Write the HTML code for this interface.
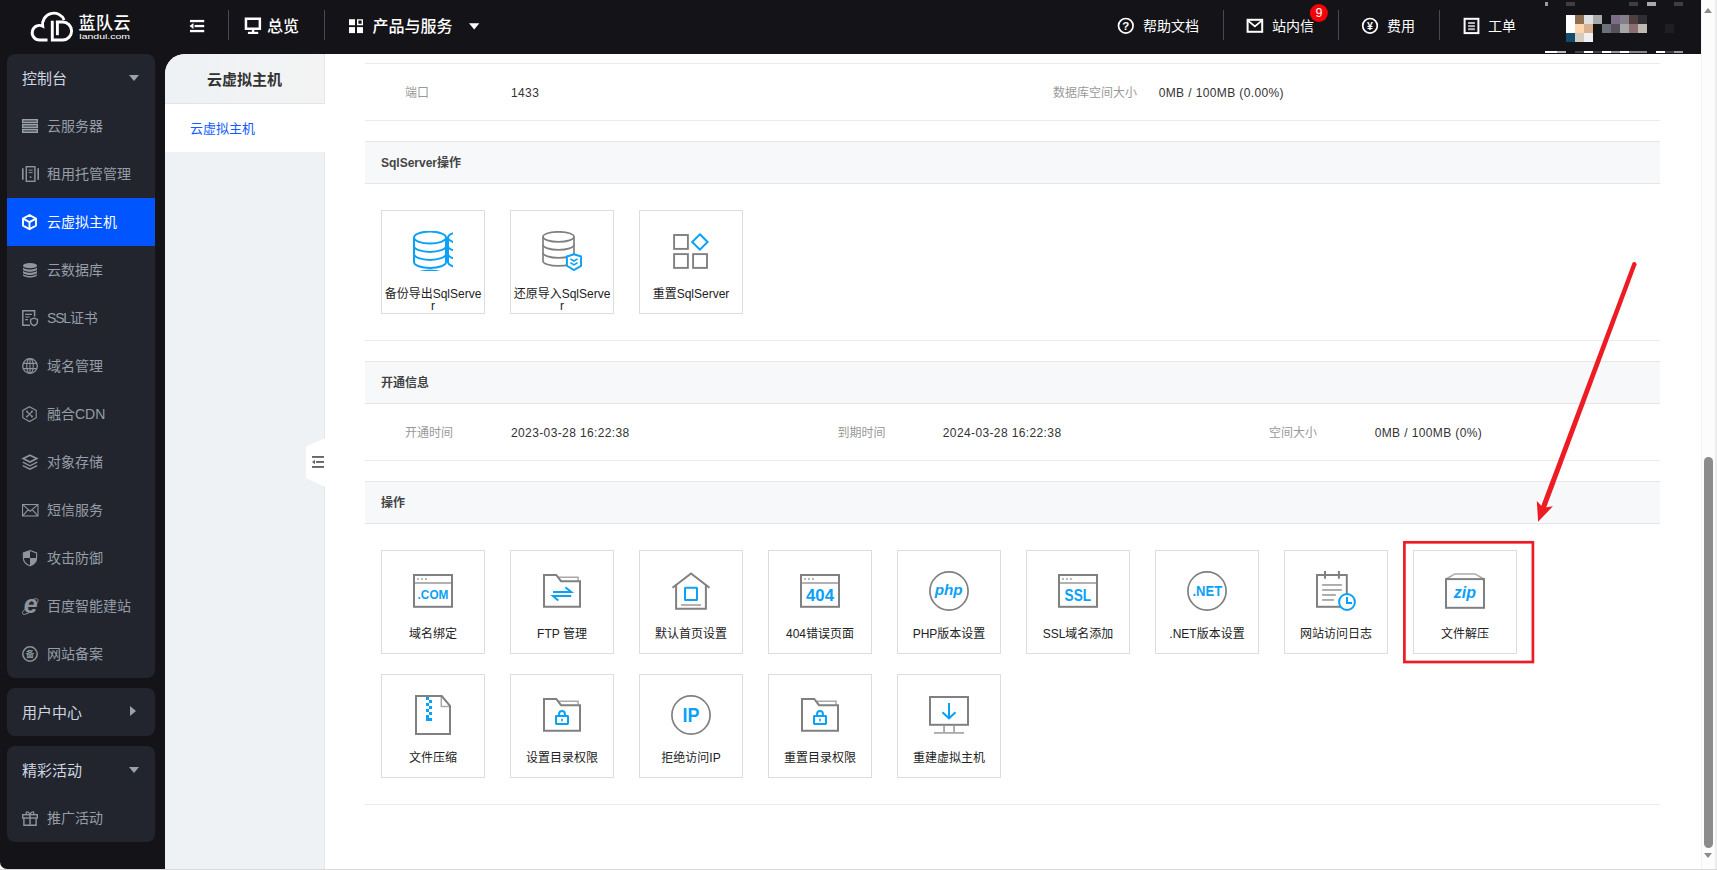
<!DOCTYPE html>
<html lang="zh-CN">
<head>
<meta charset="utf-8">
<title>蓝队云 控制台 - 云虚拟主机</title>
<style>
*{box-sizing:border-box;margin:0;padding:0}
html,body{width:1717px;height:870px;overflow:hidden;background:#fff}
body{position:relative;font-family:"Liberation Sans","Noto Sans CJK SC",sans-serif;font-size:12px;color:#333;-webkit-font-smoothing:antialiased}
.abs{position:absolute}
/* header */
#hdr{position:absolute;left:0;top:0;width:1701px;height:54px;background:#131318;color:#fff}
#hdr .t{position:absolute;top:0;height:54px;line-height:52px;white-space:nowrap;color:#fff}
#hdr .t16{font-size:16px;line-height:54px;font-weight:500}
#hdr .t14{font-size:14px}
#hdr .dv{position:absolute;top:10px;width:1.4px;height:30px;background:#474a55}
#hdr svg{position:absolute;overflow:visible}
#ava i{position:absolute;display:block}
/* sidebar */
#side{position:absolute;left:0;top:54px;width:200px;height:815px;background:#131318;border-bottom-left-radius:7px}
.pnl{position:absolute;left:7px;width:148px;background:#22252e;border-radius:8px;overflow:hidden}
.pnl .h{position:relative;height:48px;line-height:49px;padding-left:15px;font-size:15px;color:#cfd6e0}
.pnl .h i{position:absolute;right:16px;top:21px;width:0;height:0;border-left:5.5px solid transparent;border-right:5.5px solid transparent;border-top:6px solid #9aa3ad}
.pnl .h i.r{top:18px;right:19px;border-top:5.5px solid transparent;border-bottom:5.5px solid transparent;border-left:6px solid #9aa3ad;border-right:0}
.pnl .it{position:relative;height:48px;line-height:49px;padding-left:40px;font-size:14px;color:#969da7;white-space:nowrap}
.pnl .it.on{background:#0055ff;color:#fff}
.pnl .it svg{position:absolute;left:15px;top:16px;width:16px;height:16px;overflow:visible}
/* submenu */
#sub{position:absolute;left:165px;top:54px;width:160px;height:816px;background:#eff2f5;border-top-left-radius:20px;overflow:hidden}
#sub .tt{height:50px;line-height:52px;text-align:center;font-size:15px;font-weight:bold;color:#333;background:linear-gradient(90deg,#eef2f5,#f3f3f3);border-bottom:1px solid #e2e4e6;border-right:1px solid #e4e7ea}
#sub .si{height:48px;line-height:49px;padding-left:25px;font-size:13px;color:#0f5bff;background:#fff}
/* main */
#main{position:absolute;left:325px;top:54px;width:1376px;height:816px;background:#fff;overflow:hidden}
.ln{position:absolute;left:40px;width:1295px;height:1px;background:#ebebeb}
.sh{position:absolute;left:40px;width:1295px;height:43px;background:#f7f8fa;border-top:1px solid #e6e6e6;border-bottom:1px solid #e6e6e6;line-height:43px;padding-left:16px;font-weight:bold;font-size:12px;color:#444}
.lb{position:absolute;color:#999;font-size:12px;white-space:nowrap;line-height:16px}
.vl{position:absolute;color:#333;font-size:12px;white-space:nowrap;line-height:16px;letter-spacing:.38px}
.tile{position:absolute;width:104px;height:104px;border:1px solid #ddd;background:#fff}
.tile svg{position:absolute;left:31px;top:20px;width:40px;height:40px;overflow:hidden}
.tile span{position:absolute;left:0;top:77px;width:102px;padding:0 2px;text-align:center;font-size:12px;line-height:12px;color:#222;word-break:break-all}
/* scrollbar */
#sb{position:absolute;left:1701px;top:0;width:16px;height:870px;background:#fcfcfc;border-left:1px solid #f3f3f3}
</style>
</head>
<body>
<div id="hdr">
<svg width="1701" height="54" viewBox="0 0 1701 54" style="left:0;top:0">
 <g fill="none" stroke="#fff" stroke-width="2.9">
  <path d="M47.500 40H39.500A7.300 7.300 0 1 1 42.700 26.140A11.240 11.240 0 0 1 64.150 20"/>
  <path d="M55.9 22H62.6A9 9 0 0 1 62.6 40H52.3V20.7"/>
  <path d="M57.4 21V35.2"/>
 </g>
 <text x="78.6" y="29" font-family="'Liberation Sans','Noto Sans CJK SC',sans-serif" font-size="17" font-weight="500" fill="#fff" textLength="52" lengthAdjust="spacing">蓝队云</text>
 <text x="79.3" y="39.2" font-family="'Liberation Sans',sans-serif" font-size="7.5" fill="#fff" textLength="50.8" lengthAdjust="spacingAndGlyphs">landui.com</text>
 <!-- fold icon -->
 <g fill="#fff">
  <rect x="190" y="19.900" width="14.200" height="2.300"/><rect x="194.600" y="24.900" width="9.600" height="2.300"/><rect x="190" y="29.900" width="14.200" height="2.300"/>
  <path d="M189.500 26.050L193.500 23.100V29Z"/>
 </g>
 <!-- monitor -->
 <g fill="#fff"><path d="M244.700 17.500h16.400v12.600H244.700zM247.200 20v7.500h11.400V20z" fill-rule="evenodd"/><rect x="251.900" y="30" width="2.400" height="2"/><rect x="247.900" y="31.800" width="10.300" height="2.200"/></g>
 <!-- grid -->
 <g fill="#fff"><rect x="349" y="19.2" width="6" height="6"/><rect x="349" y="27.1" width="6" height="6"/><rect x="357" y="27.1" width="6" height="6"/><path d="M357 19.2h6v6h-6zM358.4 20.6v3.2h3.2v-3.2z" fill-rule="evenodd"/><path d="M469 23.2h10.4l-5.2 6.2z"/></g>
 <!-- help -->
 <circle cx="1125.8" cy="25.8" r="7.3" fill="none" stroke="#fff" stroke-width="1.7"/>
 <text x="1125.8" y="30" text-anchor="middle" font-family="'Liberation Sans',sans-serif" font-size="11.5" font-weight="bold" fill="#fff">?</text>
 <!-- mail -->
 <g fill="none" stroke="#fff" stroke-width="2"><rect x="1247.6" y="19.8" width="14.6" height="12"/><path d="M1248 20.6L1254.9 26.4L1261.8 20.6" stroke-width="1.8"/></g>
 <!-- badge -->
 <circle cx="1318.9" cy="13" r="9" fill="#f60309"/>
 <text x="1318.9" y="17.400" text-anchor="middle" font-family="'Liberation Sans',sans-serif" font-size="12.500" fill="#fff">9</text>
 <!-- yen -->
 <circle cx="1370" cy="25.8" r="7.3" fill="none" stroke="#fff" stroke-width="1.7"/>
 <text x="1370" y="29.6" text-anchor="middle" font-family="'Liberation Sans',sans-serif" font-size="10.5" font-weight="bold" fill="#fff">¥</text>
 <!-- order -->
 <rect x="1464.6" y="18.8" width="13.8" height="14.3" fill="none" stroke="#fff" stroke-width="2"/>
 <g fill="#b9b9b9"><rect x="1468.1" y="22" width="6.8" height="2"/><rect x="1468.1" y="25.1" width="6.8" height="2"/><rect x="1468.1" y="28.2" width="6.8" height="2"/></g>
</svg>
<i class="dv" style="left:228px"></i><i class="dv" style="left:324px"></i>
<i class="dv" style="left:1223px"></i><i class="dv" style="left:1338px"></i><i class="dv" style="left:1439px"></i>
<span class="t t16" style="left:267px">总览</span>
<span class="t t16" style="left:372.5px">产品与服务</span>
<span class="t t14" style="left:1143px">帮助文档</span>
<span class="t t14" style="left:1272px">站内信</span>
<span class="t t14" style="left:1387px">费用</span>
<span class="t t14" style="left:1488px">工单</span>
<div id="ava"><i style="left:1566px;top:15px;width:9px;height:9px;background:#fff"></i><i style="left:1575px;top:15px;width:9px;height:9px;background:#8d7054"></i><i style="left:1584px;top:15px;width:9px;height:9px;background:#e0e0e0"></i><i style="left:1593px;top:15px;width:9px;height:9px;background:#a8a8a8"></i><i style="left:1611px;top:15px;width:9px;height:9px;background:#7c6c8a"></i><i style="left:1620px;top:15px;width:9px;height:9px;background:#867e86"></i><i style="left:1629px;top:15px;width:9px;height:9px;background:#4f3f3f"></i><i style="left:1638px;top:15px;width:9px;height:9px;background:#2f2f33"></i><i style="left:1566px;top:24px;width:9px;height:9px;background:#fff"></i><i style="left:1575px;top:24px;width:9px;height:9px;background:#fdd5ae"></i><i style="left:1584px;top:24px;width:9px;height:9px;background:#d9b190"></i><i style="left:1602px;top:24px;width:9px;height:9px;background:#6c7079"></i><i style="left:1611px;top:24px;width:9px;height:9px;background:#56535f"></i><i style="left:1620px;top:24px;width:9px;height:9px;background:#a6a6a6"></i><i style="left:1629px;top:24px;width:9px;height:9px;background:#8b6e71"></i><i style="left:1638px;top:24px;width:9px;height:9px;background:#bfb9b1"></i><i style="left:1665px;top:24px;width:9px;height:9px;background:#1f1f21"></i><i style="left:1566px;top:33px;width:9px;height:9px;background:#144c6c"></i><i style="left:1575px;top:33px;width:9px;height:9px;background:#d6cbc0"></i><i style="left:1584px;top:33px;width:9px;height:9px;background:#f0f0f0"></i><i style="left:1545px;top:2px;width:3px;height:4px;background:#9a9a9a"></i><i style="left:1566px;top:2px;width:9px;height:4px;background:#3f3f43"></i><i style="left:1629px;top:2px;width:9px;height:4px;background:#3f3f43"></i><i style="left:1647px;top:2px;width:9px;height:4px;background:#a9a9a9"></i><i style="left:1674px;top:2px;width:9px;height:4px;background:#3f3f43"></i><i style="left:1545px;top:51px;width:12px;height:1.5px;background:#fff"></i><i style="left:1557px;top:51px;width:9px;height:1.5px;background:#bbb"></i><i style="left:1575px;top:51px;width:9px;height:1.5px;background:#444"></i><i style="left:1584px;top:51px;width:9px;height:1.5px;background:#fff"></i><i style="left:1593px;top:51px;width:9px;height:1.5px;background:#444"></i><i style="left:1602px;top:51px;width:9px;height:1.5px;background:#fff"></i><i style="left:1611px;top:51px;width:9px;height:1.5px;background:#999"></i><i style="left:1620px;top:51px;width:9px;height:1.5px;background:#fff"></i><i style="left:1629px;top:51px;width:18px;height:1.5px;background:#888"></i><i style="left:1656px;top:51px;width:9px;height:1.5px;background:#fff"></i><i style="left:1665px;top:51px;width:9px;height:1.5px;background:#444"></i><i style="left:1674px;top:51px;width:9px;height:1.5px;background:#999"></i></div>
</div>
<div id="side">
<div class="pnl" style="top:0;height:624px"><div class="h">控制台<i></i></div>
<div class="it"><svg viewBox="0 0 16 16"><g fill="#555c63" stroke="#9aa2a8" stroke-width="1.3"><rect x=".65" y="1.65" width="14.7" height="2.9"/><rect x=".65" y="6.55" width="14.7" height="2.9"/><rect x=".65" y="11.45" width="14.7" height="2.9"/></g></svg>云服务器</div>
<div class="it"><svg viewBox="0 0 16 16"><g fill="none" stroke="#8e959d" stroke-width="1.4"><rect x="4.3" y=".7" width="8.6" height="14.6"/><path d="M.8 2.2V13.8M16.2 2.2V13.8" stroke-width="1.6"/><path d="M6.6 4.2H10.6M6.6 6.6H10.6" stroke-width="1"/></g><rect x="7.8" y="10.3" width="1.6" height="1.6" fill="#8e959d"/></svg>租用托管管理</div>
<div class="it on"><svg viewBox="0 0 16 16"><g fill="none" stroke="#fff" stroke-width="1.9" stroke-linejoin="round"><path d="M7.5 1L14 4.6V11.6L7.5 15.2L1 11.6V4.6Z"/><path d="M1 4.6L7.5 8.2L14 4.6M7.5 8.2V15.2"/></g></svg>云虚拟主机</div>
<div class="it"><svg viewBox="0 0 16 16"><g fill="#8e959d"><ellipse cx="8" cy="3.700" rx="7" ry="2.600"/><path d="M1 5.100c0 1.400 3.100 2.500 7 2.500s7-1.100 7-2.500v2.200c0 1.400-3.100 2.500-7 2.500s-7-1.100-7-2.500z"/><path d="M1 8.300c0 1.400 3.100 2.500 7 2.500s7-1.100 7-2.500v2.200c0 1.400-3.100 2.500-7 2.500s-7-1.100-7-2.500z"/><path d="M1 11.500c0 1.400 3.100 2.500 7 2.500s7-1.100 7-2.500v1.400c0 1.400-3.100 2.500-7 2.500s-7-1.100-7-2.500z"/></g></svg>云数据库</div>
<div class="it"><svg viewBox="0 0 16 16"><g fill="none" stroke="#8e959d"><path d="M8 15.2H.8V.8H12.6V6.4" stroke-width="1.5"/><path d="M3.2 4.4H10M3.2 7H7.6M3.2 9.6H6" stroke-width="1.1"/><path d="M12 8.2l3.4 1.2v2.6c0 1.8-1.6 3-3.4 3.7c-1.800-.7-3.400-1.900-3.400-3.700V9.400z" stroke-width="1.4" fill="#22252e"/></g></svg><b style="font-weight:normal;letter-spacing:-1.2px">SSL</b>证书</div>
<div class="it"><svg viewBox="0 0 16 16"><g fill="none" stroke="#8e959d" stroke-width="1.3"><circle cx="8" cy="8" r="7.3"/><ellipse cx="8" cy="8" rx="3.3" ry="7.3" stroke-width="1.1"/><path d="M8 .7V15.3M1.4 5.4H14.6M1.4 10.6H14.6" stroke-width="1.1"/></g></svg>域名管理</div>
<div class="it"><svg viewBox="0 0 16 16"><g fill="none" stroke="#8e959d" stroke-width="1.1"><path d="M7.5 .7L14.2 4.4V11.8L7.500 15.5L.8 11.8V4.4Z"/><path d="M5.2 5.800L9.800 10.400M9.800 5.800L5.200 10.400" stroke-width="1.200"/></g><g fill="#8e959d"><circle cx="5" cy="5.6" r="1"/><circle cx="10" cy="5.6" r="1"/><circle cx="5" cy="10.600" r="1"/><circle cx="10" cy="10.600" r="1"/></g></svg>融合CDN</div>
<div class="it"><svg viewBox="0 0 16 16"><g fill="none" stroke="#8e959d" stroke-linejoin="miter"><path d="M8 1.200L14.800 4.600L8 8L1.200 4.600Z" stroke-width="1.7"/><path d="M.8 8.200L8 11.800L15.200 8.200M.8 11.600L8 15.200L15.200 11.600" stroke-width="1.300"/></g></svg>对象存储</div>
<div class="it"><svg viewBox="0 0 16 16"><g fill="none" stroke="#8e959d" stroke-width="1.100"><rect x=".55" y="2.550" width="15.4" height="11.400"/><path d="M.6 2.600L8.250 9.200L15.900 2.600M.6 13.900L6.300 7.600M15.900 13.900L10.200 7.600"/></g></svg>短信服务</div>
<div class="it"><svg viewBox="0 0 16 16"><path d="M8 .6L14.600 3V8C14.600 11.900 11.400 14.600 8 15.800C4.600 14.600 1.400 11.900 1.400 8V3Z" fill="none" stroke="#8e959d" stroke-width="1.100"/><path d="M8 .6L1.400 3V8H8Z" fill="#8e959d"/><path d="M8 8H14.600C14.600 11.900 11.400 14.600 8 15.800Z" fill="#8e959d"/></svg>攻击防御</div>
<div class="it"><svg viewBox="0 0 16 16"><text x="8.6" y="15.4" text-anchor="middle" font-family="'Liberation Sans',sans-serif" font-size="25" font-weight="bold" font-style="italic" fill="#8e959d">e</text><path d="M8.500 2.800C12.500 .3 15.600 .2 16 1.800C16.300 2.800 15.600 4.300 14.600 5.600M3.500 10.500C.6 13.400 -.2 15.500 1 16.200C2.200 16.800 4.500 16 7 14.600" fill="none" stroke="#8e959d" stroke-width="1"/></svg>百度智能建站</div>
<div class="it"><svg viewBox="0 0 16 16"><circle cx="8" cy="8" r="7.200" fill="none" stroke="#8e959d" stroke-width="1.500"/><text x="8" y="11" text-anchor="middle" font-family="'Liberation Sans','Noto Sans CJK SC',sans-serif" font-size="8.500" font-weight="bold" fill="#8e959d">备</text></svg>网站备案</div>
</div>
<div class="pnl" style="top:634px;height:48px"><div class="h">用户中心<i class="r"></i></div></div>
<div class="pnl" style="top:692px;height:96px"><div class="h">精彩活动<i></i></div>
<div class="it"><svg viewBox="0 0 16 16"><g fill="none" stroke="#8e959d" stroke-width="1.400"><path d="M1.900 8V15.300H14.100V8"/><rect x=".7" y="4.700" width="14.600" height="3.300"/><path d="M8 4.700V15.300"/><path d="M8 4.500C6.500 .8 2.800 1.200 4.600 4.500M8 4.500C9.500 .8 13.200 1.200 11.400 4.500" stroke-width="1.300"/></g></svg>推广活动</div>
</div>
</div>
<div id="sub">
  <div class="tt">云虚拟主机</div>
  <div class="si">云虚拟主机</div>
  <div style="height:720px;border-right:1px solid #e4e7ea"></div>
</div>
<div id="main">
<i class="ln" style="top:9px"></i><i class="ln" style="top:66px"></i>
<span class="lb" style="left:80px;top:31px">端口</span><span class="vl" style="left:186px;top:31px">1433</span>
<span class="lb" style="left:728px;top:31px">数据库空间大小</span><span class="vl" style="left:833.700px;top:31px">0MB / 100MB (0.00%)</span>
<div class="sh" style="top:87px">SqlServer操作</div>
<div class="tile" style="left:56px;top:156px"><svg viewBox="0 0 40 40"><g fill="none" stroke="#0aa1f7" stroke-width="2"><ellipse cx="17" cy="6.6" rx="16" ry="6"/><path d="M1 14.9A16 6 0 0 0 33 14.9"/><path d="M1 22.9A16 6 0 0 0 33 22.9"/><path d="M1 31A16 6 0 0 0 33 31"/><path d="M1 6.6V31M33 6.6V31"/></g><g transform="translate(34 0)"><g fill="none" stroke="#0aa1f7" stroke-width="2"><ellipse cx="17" cy="6.6" rx="16" ry="6"/><path d="M1 14.9A16 6 0 0 0 33 14.9"/><path d="M1 22.9A16 6 0 0 0 33 22.9"/><path d="M1 31A16 6 0 0 0 33 31"/><path d="M1 6.6V31M33 6.6V31"/></g></g><ellipse cx="17" cy="45.500" rx="16" ry="6" fill="none" stroke="#0aa1f7" stroke-width="2"/></svg><span>备份导出SqlServer</span></div>
<div class="tile" style="left:185px;top:156px"><svg viewBox="0 0 40 40"><g fill="none" stroke="#808080" stroke-width="1.7"><ellipse cx="16.5" cy="5.8" rx="15.5" ry="5"/><path d="M1.0 13.8A15.5 5 0 0 0 32.0 13.8"/><path d="M1.0 21.8A15.5 5 0 0 0 32.0 21.8"/><path d="M1.0 29.9A15.5 5 0 0 0 32.0 29.9"/><path d="M1.0 5.8V29.9M32.0 5.8V29.9"/></g><path d="M32 23.200L39.100 25.500V34.800L32 39L24.900 34.800V25.500Z" fill="#fff" stroke="#0aa1f7" stroke-width="2" stroke-linejoin="miter"/><path d="M28.400 27.800L32 30L35.600 27.800M28.400 31.700L32 33.900L35.600 31.700" fill="none" stroke="#0aa1f7" stroke-width="1.500"/></svg><span>还原导入SqlServer</span></div>
<div class="tile" style="left:314px;top:156px"><svg viewBox="0 0 40 40"><g fill="none" stroke="#808080" stroke-width="1.900"><rect x="3.100" y="4" width="13.800" height="13.900"/><rect x="3.100" y="23.100" width="13.800" height="13.800"/><rect x="22.100" y="23.100" width="13.900" height="13.800"/></g><path d="M28.900 3.300L36.600 11L28.900 18.700L21.200 11Z" fill="none" stroke="#0aa1f7" stroke-width="2"/></svg><span>重置SqlServer</span></div>
<i class="ln" style="top:286px"></i>
<div class="sh" style="top:307px">开通信息</div>
<span class="lb" style="left:80px;top:371px">开通时间</span><span class="vl" style="left:186px;top:371px">2023-03-28 16:22:38</span>
<span class="lb" style="left:512.500px;top:371px">到期时间</span><span class="vl" style="left:617.800px;top:371px">2024-03-28 16:22:38</span>
<span class="lb" style="left:944px;top:371px">空间大小</span><span class="vl" style="left:1049.700px;top:371px">0MB / 100MB (0%)</span>
<i class="ln" style="top:406px"></i>
<div class="sh" style="top:427px">操作</div>
<div class="tile" style="left:56px;top:496px"><svg viewBox="0 0 40 40"><rect x="1" y="4" width="38" height="31.8" fill="none" stroke="#808080" stroke-width="2"/><rect x="2" y="11.1" width="36" height="1.8" fill="#aaaaaa"/><g fill="#aaaaaa"><rect x="4.1" y="7.1" width="1.8" height="1.8"/><rect x="8" y="7.100" width="1.8" height="1.8"/><rect x="12" y="7.100" width="1.8" height="1.8"/></g><text x="4.600" y="27.900" font-family="'Liberation Sans',sans-serif" font-size="12.300" font-weight="bold" fill="#0aa1f7" textLength="30.800" lengthAdjust="spacingAndGlyphs">.COM</text></svg><span>域名绑定</span></div>
<div class="tile" style="left:185px;top:496px"><svg viewBox="0 0 40 40"><path d="M16.8 6.3H36.1V9.6" fill="none" stroke="#aaaaaa" stroke-width="1.5"/><path d="M2 4H14.3L19 10.200H38V35.800H2Z" fill="none" stroke="#808080" stroke-width="2"/><g fill="none" stroke="#0aa1f7" stroke-width="2"><path d="M11 20.900H29.200L23.400 16.200"/><path d="M29.200 24.900H11L16.300 29.400"/></g></svg><span>FTP 管理</span></div>
<div class="tile" style="left:314px;top:496px"><svg viewBox="0 0 40 40"><g fill="none" stroke="#808080" stroke-width="2"><path d="M1.500 16.700L20 2.500L38.500 16.700"/><path d="M5.100 13.700V37.700H34.900V13.700"/></g><rect x="14" y="16.800" width="12" height="12.100" rx=".5" fill="none" stroke="#0aa1f7" stroke-width="2"/><rect x="10" y="33.100" width="20" height="1.800" fill="#aaaaaa"/></svg><span>默认首页设置</span></div>
<div class="tile" style="left:443px;top:496px"><svg viewBox="0 0 40 40"><rect x="1" y="4" width="38" height="31.8" fill="none" stroke="#808080" stroke-width="2"/><rect x="2" y="11.1" width="36" height="1.8" fill="#aaaaaa"/><g fill="#aaaaaa"><rect x="4.1" y="7.1" width="1.8" height="1.8"/><rect x="8" y="7.100" width="1.8" height="1.8"/><rect x="12" y="7.100" width="1.8" height="1.8"/></g><text x="20" y="29.900" text-anchor="middle" font-family="'Liberation Sans',sans-serif" font-size="16.800" font-weight="bold" fill="#0aa1f7">404</text></svg><span>404错误页面</span></div>
<div class="tile" style="left:572px;top:496px"><svg viewBox="0 0 40 40"><circle cx="20" cy="20" r="19.100" fill="none" stroke="#808080" stroke-width="1.700"/><text x="5.700" y="23.900" font-family="'Liberation Sans',sans-serif" font-size="15.200" font-weight="bold" font-style="italic" fill="#0aa1f7" textLength="28" lengthAdjust="spacingAndGlyphs">php</text></svg><span>PHP版本设置</span></div>
<div class="tile" style="left:701px;top:496px"><svg viewBox="0 0 40 40"><rect x="1" y="4" width="38" height="31.8" fill="none" stroke="#808080" stroke-width="2"/><rect x="2" y="11.1" width="36" height="1.8" fill="#aaaaaa"/><g fill="#aaaaaa"><rect x="4.1" y="7.1" width="1.8" height="1.8"/><rect x="8" y="7.100" width="1.8" height="1.8"/><rect x="12" y="7.100" width="1.8" height="1.8"/></g><text x="6.600" y="30.100" font-family="'Liberation Sans',sans-serif" font-size="15.900" font-weight="bold" fill="#0aa1f7" textLength="26.500" lengthAdjust="spacingAndGlyphs">SSL</text></svg><span>SSL域名添加</span></div>
<div class="tile" style="left:830px;top:496px"><svg viewBox="0 0 40 40"><circle cx="20" cy="20" r="19.100" fill="none" stroke="#808080" stroke-width="1.700"/><text x="5.400" y="25" font-family="'Liberation Sans',sans-serif" font-size="14" font-weight="bold" fill="#0aa1f7" textLength="29.700" lengthAdjust="spacingAndGlyphs">.NET</text></svg><span>.NET版本设置</span></div>
<div class="tile" style="left:959px;top:496px"><svg viewBox="0 0 40 40"><rect x="1" y="4" width="29.800" height="31.800" fill="none" stroke="#808080" stroke-width="2"/><path d="M9 0V7.800M22.900 0V7.800" stroke="#808080" stroke-width="2"/><g fill="#aaaaaa"><rect x="6.100" y="13" width="19.800" height="1.900"/><rect x="6.100" y="18" width="19.800" height="1.900"/><rect x="6.100" y="23" width="13.800" height="1.900"/><rect x="6.100" y="28" width="11.800" height="1.900"/></g><circle cx="31" cy="31" r="7.900" fill="#fff" stroke="#0aa1f7" stroke-width="2"/><path d="M31 25.900V32H36" fill="none" stroke="#0aa1f7" stroke-width="2"/></svg><span>网站访问日志</span></div>
<div class="tile" style="left:1088px;top:496px"><svg viewBox="0 0 40 40"><path d="M1.200 8L9.800 2.900H30L38.800 8" fill="none" stroke="#aaaaaa" stroke-width="1.500"/><rect x="1" y="8.100" width="38" height="28.700" fill="none" stroke="#808080" stroke-width="2"/><text x="8.800" y="26.900" font-family="'Liberation Sans',sans-serif" font-size="15.800" font-weight="bold" font-style="italic" fill="#0aa1f7" textLength="22.200" lengthAdjust="spacingAndGlyphs">zip</text></svg><span>文件解压</span></div>
<div class="tile" style="left:56px;top:620px"><svg viewBox="0 0 40 40"><path d="M28.300 1.500V11.600H36.500" fill="none" stroke="#aaaaaa" stroke-width="1.500"/><path d="M3 1H28.700L37 10.900V39H3Z" fill="none" stroke="#808080" stroke-width="2"/><g fill="#0aa1f7"><rect x="13" y="2" width="3" height="3"/><rect x="16" y="5" width="3" height="3"/><rect x="13" y="8" width="3" height="3"/><rect x="16" y="11" width="3" height="3"/><rect x="13" y="14" width="3" height="3"/><rect x="16" y="17" width="3" height="3"/><path d="M13 20h3v3h3v3h-6z"/></g></svg><span>文件压缩</span></div>
<div class="tile" style="left:185px;top:620px"><svg viewBox="0 0 40 40"><path d="M16.8 6.3H36.1V9.6" fill="none" stroke="#aaaaaa" stroke-width="1.5"/><path d="M2 4H14.3L19 10.200H38V35.800H2Z" fill="none" stroke="#808080" stroke-width="2"/><g fill="none" stroke="#0aa1f7" stroke-width="2"><rect x="14" y="21" width="12" height="7.900" rx=".4"/><path d="M17.100 20.500V18.900A2.900 2.900 0 0 1 22.900 18.900V20.500"/></g><rect x="19.200" y="23.400" width="1.600" height="3.200" rx=".8" fill="#0aa1f7"/></svg><span>设置目录权限</span></div>
<div class="tile" style="left:314px;top:620px"><svg viewBox="0 0 40 40"><circle cx="20" cy="20" r="19.100" fill="none" stroke="#808080" stroke-width="1.700"/><text x="11.400" y="27" font-family="'Liberation Sans',sans-serif" font-size="19.700" font-weight="bold" fill="#0aa1f7" textLength="17" lengthAdjust="spacingAndGlyphs">IP</text></svg><span>拒绝访问IP</span></div>
<div class="tile" style="left:443px;top:620px"><svg viewBox="0 0 40 40"><path d="M16.8 6.3H36.1V9.6" fill="none" stroke="#aaaaaa" stroke-width="1.5"/><path d="M2 4H14.3L19 10.200H38V35.800H2Z" fill="none" stroke="#808080" stroke-width="2"/><g fill="none" stroke="#0aa1f7" stroke-width="2"><rect x="14" y="21" width="12" height="7.900" rx=".4"/><path d="M17.100 20.500V18.900A2.900 2.900 0 0 1 22.900 18.900V20.500"/></g><rect x="19.200" y="23.400" width="1.600" height="3.200" rx=".8" fill="#0aa1f7"/></svg><span>重置目录权限</span></div>
<div class="tile" style="left:572px;top:620px"><svg viewBox="0 0 40 40"><rect x="1" y="2" width="38" height="27.800" fill="none" stroke="#808080" stroke-width="2"/><g fill="#aaaaaa"><rect x="14.100" y="30.800" width="1.900" height="6.300"/><rect x="24.100" y="30.800" width="1.900" height="6.300"/><rect x="5" y="37" width="30" height="1.800"/></g><path d="M20 7.900V23M13.400 17.200L20 23.300L26.600 17.200" fill="none" stroke="#0aa1f7" stroke-width="2"/></svg><span>重建虚拟主机</span></div>
<i class="ln" style="top:750px"></i>
<svg style="position:absolute;left:0;top:0;overflow:visible" width="1376" height="816" viewBox="325 54 1376 816"><rect x="1404.400" y="542.300" width="128.500" height="119.700" fill="none" stroke="#ed1c24" stroke-width="2.700"/><path d="M1636.36 265.07L1545.71 508.73L1540.84 506.91L1632.24 263.53Z" fill="#ed1c24"/><circle cx="1634.300" cy="264.300" r="2.200" fill="#ed1c24"/><path d="M1538.10 521.80L1536.8 500.9L1543.28 507.82L1552.9 506.3Z" fill="#ed1c24"/></svg>
</div>
<svg style="position:absolute;left:300px;top:430px;overflow:visible" width="30" height="64" viewBox="300 430 30 64"><path d="M325.500 438L306 446.400V478L325.500 487Z" fill="#fff"/><g fill="#666"><rect x="312" y="456" width="12" height="1.900"/><rect x="316" y="461" width="8" height="1.900"/><rect x="312" y="466" width="12" height="1.900"/><path d="M312 462L315 459.800V464.200Z"/></g></svg>
<div id="sb"><i style="position:absolute;left:2px;top:8px;width:0;height:0;border-left:4.5px solid transparent;border-right:4.5px solid transparent;border-bottom:5px solid #8b8b8b"></i><i style="position:absolute;left:2px;top:457px;width:9px;height:391px;border-radius:4.5px;background:#8b8b8b"></i><i style="position:absolute;left:2px;top:853px;width:0;height:0;border-left:4.5px solid transparent;border-right:4.5px solid transparent;border-top:5px solid #8b8b8b"></i><i style="position:absolute;right:0;top:0;width:2px;height:870px;background:#ececec"></i></div>
<div style="position:absolute;left:0;top:869px;width:1717px;height:1px;background:#d9d9d9"></div>
</body>
</html>
